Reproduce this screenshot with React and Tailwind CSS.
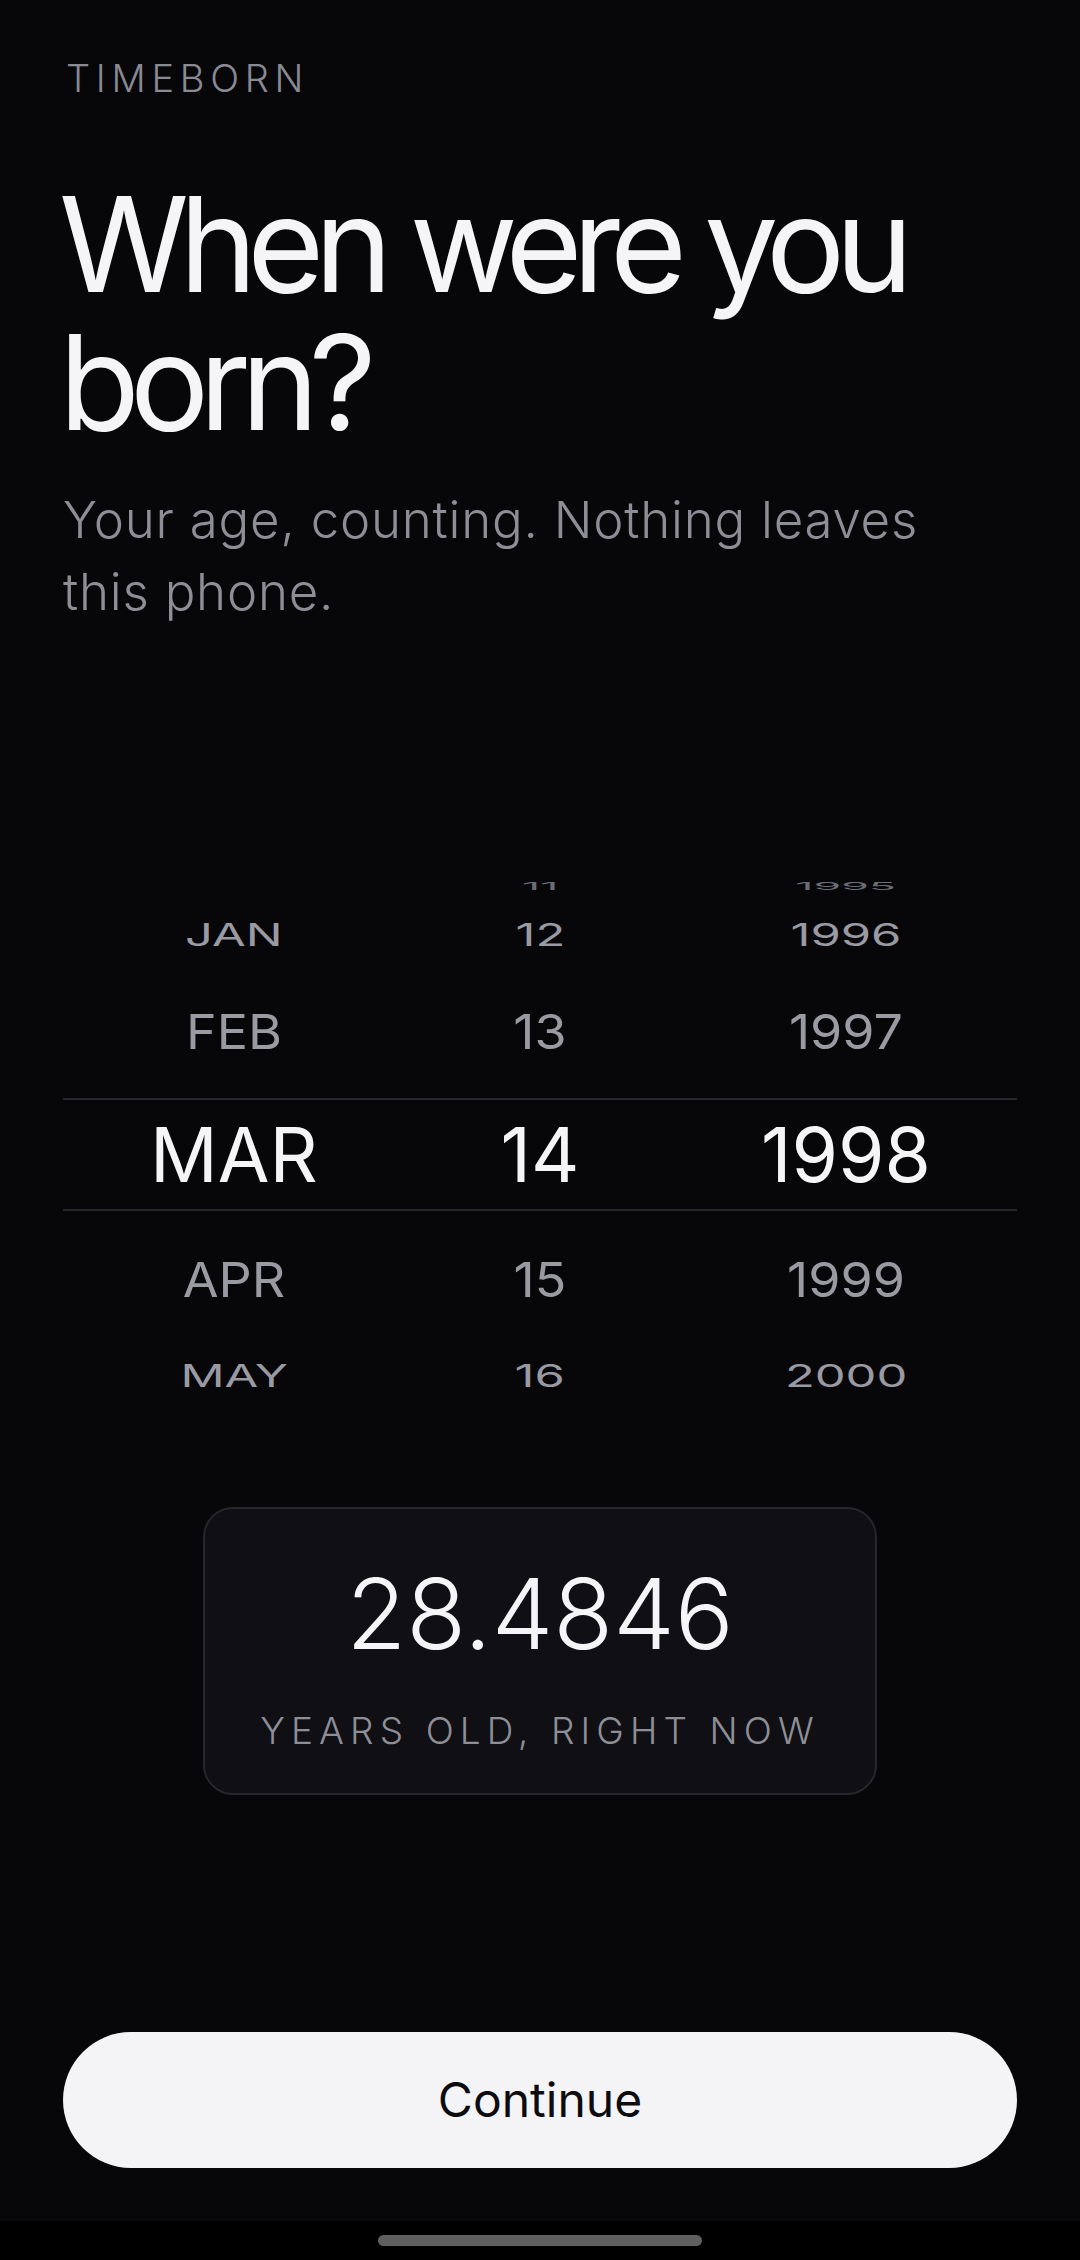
import React from "react";

const rows = [
  { m: "", d: "11", y: "1995", h: "h-[44px]", cls: "text-[52px] text-[#6c6c75] scale-y-[0.21] scale-x-[0.86]" },
  { m: "JAN", d: "12", y: "1996", h: "h-[62px]", cls: "text-[52px] text-[#9a9aa3] scale-y-[0.61] scale-x-[0.94]" },
  { m: "FEB", d: "13", y: "1997", h: "h-[132px]", cls: "text-[52px] text-[#9a9aa3] scale-y-[0.92]" },
  { m: "MAR", d: "14", y: "1998", h: "h-[113px]", cls: "text-[75px] text-[#f5f5f7]", sel: true },
  { m: "APR", d: "15", y: "1999", h: "h-[138px]", cls: "text-[52px] text-[#9a9aa3] scale-y-[0.92]" },
  { m: "MAY", d: "16", y: "2000", h: "h-[54px]", cls: "text-[52px] text-[#9a9aa3] scale-y-[0.61] scale-x-[0.94]" },
];

function Cell({ text, cls }) {
  return (
    <div className="flex items-center justify-center">
      <span className={"block leading-none font-normal " + cls}>{text}</span>
    </div>
  );
}

export default function App() {
  return (
    <div className="w-[1080px] h-[2260px] bg-[#07070a] font-['Inter','Noto_Sans',sans-serif] flex flex-col overflow-hidden">
      <div className="flex-1 flex flex-col px-[63px] pt-[55px]">
        <div className="text-[38px] leading-[46px] tracking-[0.15em] font-light text-[#8a8a93] pl-[3px]">
          TIMEBORN
        </div>
        <h1 className="mt-[74px] -ml-[4px] text-[132px] leading-[138px] tracking-[-0.075em] font-normal text-[#f5f5f7]">
          When were you born?
        </h1>
        <p className="mt-[33px] max-w-[900px] text-[51px] leading-[72px] tracking-[0.015em] font-light text-[#8e8e97]">
          Your age, counting. Nothing leaves this phone.
        </p>

        <div className="mt-[232px] flex flex-col">
          {rows.map((r, i) => (
            <div
              key={i}
              className={
                "grid grid-cols-3 px-[18px] " +
                r.h +
                (r.sel ? " border-y-2 border-[#26262c]" : "")
              }
            >
              <Cell text={r.m} cls={r.cls} />
              <Cell text={r.d} cls={r.cls} />
              <Cell text={r.y} cls={r.cls} />
            </div>
          ))}
        </div>

        <div className="mt-[104px] mx-auto w-[674px] h-[288px] rounded-[30px] border-2 border-[#26262b] bg-[#0f0f14] flex flex-col items-center pt-[46px]">
          <div className="text-[98px] leading-[118px] font-light text-[#f5f5f7]">28.4846</div>
          <div className="mt-[35px] text-[37px] leading-[45px] tracking-[0.165em] font-light text-[#8e8e97]">
            YEARS OLD, RIGHT NOW
          </div>
        </div>

        <div className="mt-[237px]">
          <button className="w-full h-[136px] rounded-full bg-[#f4f4f6] text-[48px] font-normal text-[#0c0c10] flex items-center justify-center">
            Continue
          </button>
        </div>
      </div>
      <div className="h-[39px] bg-black flex justify-center pt-[14px]">
        <div className="w-[324px] h-[11px] rounded-full bg-[#5f5f5f]" />
      </div>
    </div>
  );
}
